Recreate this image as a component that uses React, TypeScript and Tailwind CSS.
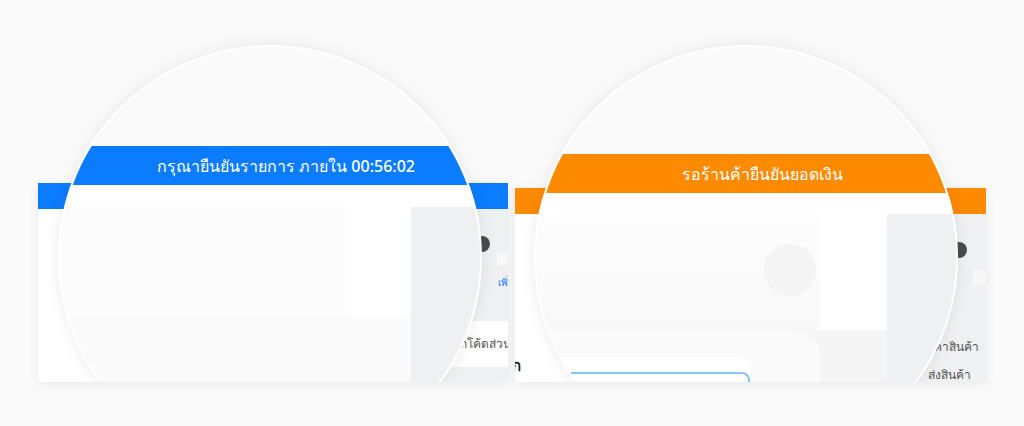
import React from 'react';

const font = { fontFamily: '"Noto Sans", "Liberation Sans", Tahoma, sans-serif' };

function Lens({ children, className }: { children: React.ReactNode; className: string }) {
  return (
    <div className="absolute inset-x-0 bottom-0 top-[-160px] overflow-hidden pointer-events-none">
      <div className={`absolute w-[424px] h-[424px] rounded-full overflow-hidden border-2 border-white bg-[#fafafa] shadow-[0_0_16px_rgba(0,0,0,0.08)] ${className}`}>
        {children}
      </div>
    </div>
  );
}

function BlueCard() {
  return (
    <div className="relative w-[470px] h-[199px] shrink-0">
      <div className="h-full rounded-b overflow-hidden bg-white shadow-[0_2px_12px_rgba(0,0,0,0.07)] flex flex-col">
        <div className="h-[26px] bg-[#0b7cfe] shrink-0" />
        <div className="flex flex-1">
          <div className="flex-1 bg-white" />
          <div className="w-[98px] bg-[#eff0f2] flex flex-col">
            <div className="mt-[27px] ml-[64px] w-4 h-4 rounded-full bg-[#4b4b4b]" />
            <div className="mt-[1px] ml-[87px] w-[14px] h-3 bg-[#f8f8f9]" />
            <div className="mt-[12px] ml-[88px] text-[10px] leading-none text-[#1a7cf5] whitespace-nowrap">เพิ่ม</div>
            <div className="mt-[34px] h-[46px] bg-white flex items-center pl-[30px]">
              <span className="text-[12px] text-[#555] whitespace-nowrap">กรอกโค้ดส่วนลด</span>
            </div>
          </div>
        </div>
      </div>
      <Lens className="left-[20px] top-[22px]">
        <div className="flex flex-col h-full">
          <div className="h-[99px] shrink-0 bg-[#fafafa]" />
          <div className="h-[39px] shrink-0 bg-[#0b7cfe] flex items-center justify-center pl-[32px]">
            <span className="text-white text-[16px] font-medium whitespace-nowrap">กรุณายืนยันรายการ ภายใน 00:56:02</span>
          </div>
          <div className="h-[22px] shrink-0 bg-white" />
          <div className="h-[110px] shrink-0 flex">
            <div className="w-[285px] bg-[#fbfbfb]" />
            <div className="w-[66px] bg-white" />
            <div className="flex-1 bg-[#eff0f2]" />
          </div>
          <div className="flex-1 flex">
            <div className="w-[351px] bg-[#fafafa]" />
            <div className="flex-1 bg-[#eff0f2]" />
          </div>
        </div>
      </Lens>
    </div>
  );
}

function OrangeCard() {
  return (
    <div className="relative w-[471px] h-[194px] shrink-0">
      <div className="h-full rounded-b overflow-hidden bg-white shadow-[0_2px_12px_rgba(0,0,0,0.07)] flex flex-col">
        <div className="h-[26px] bg-[#fe8a00] shrink-0" />
        <div className="flex flex-1">
          <div className="flex-1 bg-white flex flex-col">
            <div className="mt-[144px] -ml-[3px] text-[15px] font-bold text-[#222] leading-none">ก</div>
          </div>
          <div className="w-[99px] bg-[#eff0f2] flex flex-col">
            <div className="mt-[28px] ml-[64px] w-4 h-4 rounded-full bg-[#4b4b4b]" />
            <div className="mt-[12px] ml-[86px] w-[14px] h-[15px] bg-[#f7f7f8]" />
            <div className="mt-[56px] text-right pr-[7px] text-[12px] text-[#555] whitespace-nowrap leading-none">ราคาสินค้า</div>
            <div className="mt-[16px] text-right pr-[15px] text-[12px] text-[#555] whitespace-nowrap leading-none">ส่งสินค้า</div>
          </div>
        </div>
      </div>
      <Lens className="left-[19px] top-[17px]">
        <div className="flex flex-col h-full">
          <div className="h-[107px] shrink-0 bg-[#fafafa]" />
          <div className="h-[39px] shrink-0 bg-[#fe8a00] flex items-center justify-center pl-[32px]">
            <span className="text-white text-[16px] font-medium whitespace-nowrap">รอร้านค้ายืนยันยอดเงิน</span>
          </div>
          <div className="h-[21px] shrink-0 bg-white" />
          <div className="h-[116px] shrink-0 flex">
            <div className="w-[284px] bg-gradient-to-b from-[#fdfdfd] to-[#f8f8f9] flex justify-end pt-[30px] pr-[4px]">
              <div className="w-[52px] h-[52px] rounded-full bg-[#f4f4f5]" />
            </div>
            <div className="w-[67px] bg-white" />
            <div className="flex-1 bg-[#eff0f2]" />
          </div>
          <div className="flex-1 flex">
            <div className="w-[351px] bg-[#f5f5f6] flex">
              <div className="w-[284px] rounded-tr-[24px] bg-[#fafafb] flex flex-col pt-[27px]">
                <div className="w-[214px] rounded-tr-[10px] bg-white pt-[15px] pl-[35px]">
                  <div className="h-[30px] rounded-tr-lg border-t-2 border-r-2 border-[#8cc1ff]" />
                </div>
              </div>
            </div>
            <div className="flex-1 bg-[#eff0f2]" />
          </div>
        </div>
      </Lens>
    </div>
  );
}

export default function App() {
  return (
    <div className="w-full h-[426px] bg-[#fafafa] overflow-hidden" style={font}>
      <div className="h-[382px] flex items-end gap-[7px] pl-[38px]">
        <BlueCard />
        <OrangeCard />
      </div>
    </div>
  );
}
